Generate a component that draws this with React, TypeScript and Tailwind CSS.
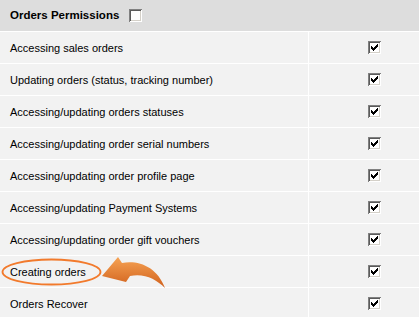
const rows = [
  'Accessing sales orders',
  'Updating orders (status, tracking number)',
  'Accessing/updating orders statuses',
  'Accessing/updating order serial numbers',
  'Accessing/updating order profile page',
  'Accessing/updating Payment Systems',
  'Accessing/updating order gift vouchers',
  'Creating orders',
  'Orders Recover',
];

// classic windows-style 13px checkbox
const Checkbox = ({ checked }: { checked?: boolean }) => (
  <span className="relative inline-block h-[13px] w-[13px] shrink-0 bg-white shadow-[inset_1px_1px_0_#808080,inset_-1px_-1px_0_#ffffff,inset_2px_2px_0_#5a5a5a,inset_-2px_-2px_0_#d4d0c8]">
    {checked ? (
      <svg width="13" height="13" viewBox="0 0 13 13" className="absolute left-0 top-0" shapeRendering="crispEdges">
        <path
          d="M3 5h1v3h-1z M4 6h1v3h-1z M5 7h1v3h-1z M6 6h1v3h-1z M7 5h1v3h-1z M8 4h1v3h-1z M9 3h1v3h-1z"
          fill="#000"
        />
      </svg>
    ) : null}
  </span>
);

const App = () => {
  return (
    <div className="relative h-[317px] w-[419px] overflow-hidden bg-white font-['Liberation_Sans',Arial,sans-serif] text-[11px] text-black">
      <div className="flex h-[31px] items-center gap-[10px] bg-[#dddddd] pl-[10px]">
        <span className="text-[11.5px] font-bold">Orders Permissions</span>
        <Checkbox />
      </div>
      {rows.map((label) => (
        <div key={label} className="grid grid-cols-[308px_1fr] gap-px border-t border-white bg-white">
          <div className="flex h-[31px] items-center bg-[#f2f2f2] pl-[10px] pt-px">{label}</div>
          <div className="flex h-[31px] items-center bg-[#f2f2f2] pl-[59px]">
            <Checkbox checked />
          </div>
        </div>
      ))}

      {/* highlight around "Creating orders" */}
      <svg width="419" height="317" className="pointer-events-none absolute left-0 top-0">
        <defs>
          <linearGradient id="arrowFill" x1="0" y1="0" x2="0" y2="1">
            <stop offset="0" stopColor="#f6a354" />
            <stop offset="1" stopColor="#d0601c" />
          </linearGradient>
        </defs>
        <ellipse cx="51.5" cy="272" rx="49" ry="12.5" fill="none" stroke="#f27a2c" strokeWidth="1.8" />
        <path
          d="M102 276 L118 257 L122 263 C139 260 157 267 165 288 C156 279 144 273 130 276 L126 282 Z"
          fill="url(#arrowFill)"
        />
      </svg>
    </div>
  );
};

export default App;
